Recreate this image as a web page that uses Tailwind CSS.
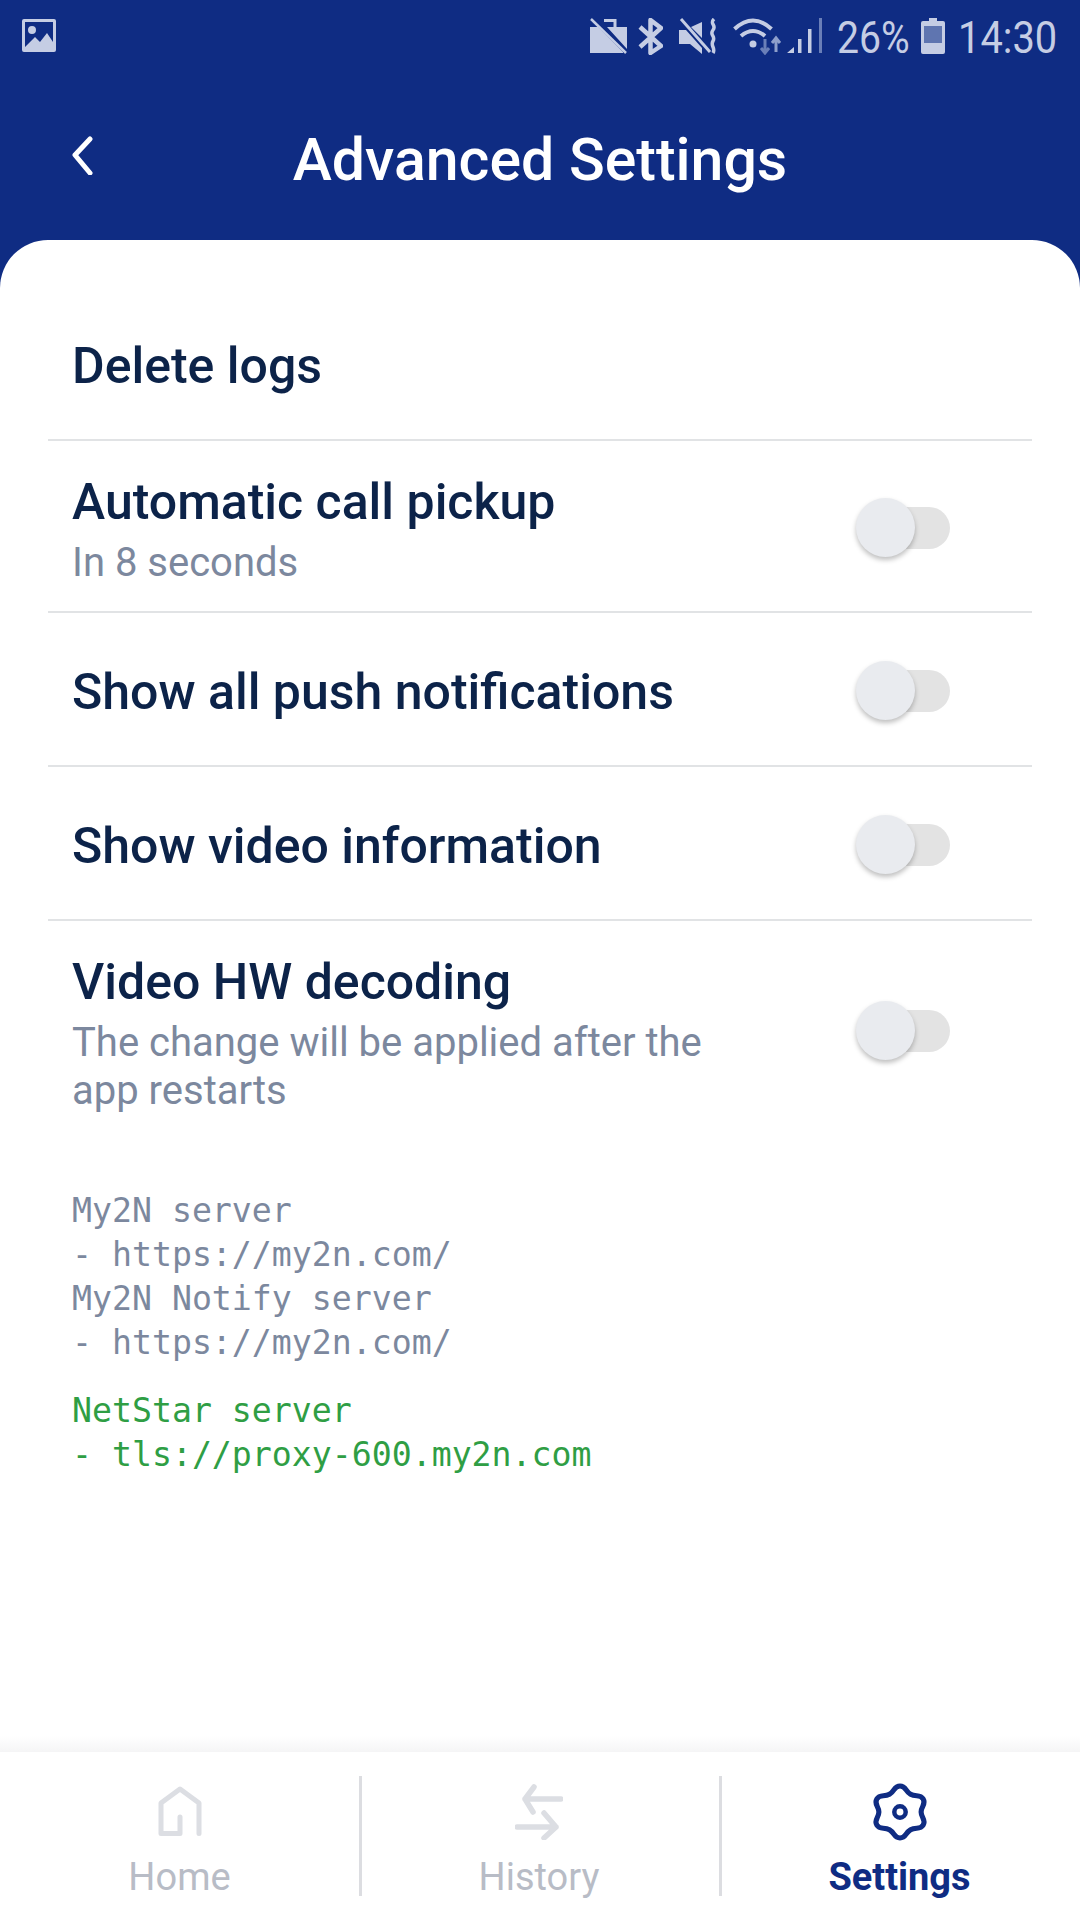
<!DOCTYPE html>
<html lang="en">
<head>
  <meta charset="UTF-8" />
  <meta name="viewport" content="width=device-width, initial-scale=1">
  <title>Advanced Settings</title>
  <script src="https://cdn.jsdelivr.net/npm/@tailwindcss/browser@4"></script>
</head>
<body class="bg-white font-['Roboto',sans-serif]">
  <div class="w-[1080px] h-[1920px] flex flex-col bg-[#0f2c83] overflow-hidden">

    <!-- status bar -->
    <div class="h-[72px] flex items-center justify-between pl-[21px] pr-[23px] text-[#c5cde4]">
      <svg width="36" height="36" viewBox="0 0 36 36"><path fill="#c5cde4" fill-rule="evenodd" d="M3 1h30a2 2 0 0 1 2 2v29a2 2 0 0 1-2 2H3a2 2 0 0 1-2-2V3a2 2 0 0 1 2-2zM4 29l10-10 5 5 7-9 6 9V4H4zM11 8a4 4 0 1 1 0 8 4 4 0 0 1 0-8z"/></svg>
      <div class="flex items-center">
        <svg width="37" height="36" viewBox="0 0 37 36"><path fill="#c5cde4" d="M0 9h8l25 25v1H0zM17 9h20v22z"/><path fill="none" stroke="#c5cde4" stroke-width="3" d="M14 2.500h11V10"/><path stroke="#c5cde4" stroke-width="2.500" d="M1 1l35 34"/></svg>
        <svg width="25" height="37" viewBox="0 0 25 37" class="ml-[11px]"><path fill="none" stroke="#c5cde4" stroke-width="4.500" stroke-linejoin="round" d="M2 9l21 19-10.500 7V2L23 10 2 29"/></svg>
        <svg width="38" height="36" viewBox="0 0 38 36" class="ml-[16px]"><path fill="#c5cde4" d="M0 12h7l16 18v6L11 26H0zM12 9l11-5v16z"/><path stroke="#c5cde4" stroke-width="3" d="M2 1l29 33"/><path fill="none" stroke="#c5cde4" stroke-width="3.500" d="M35 1c-5 5 3 6-1 11s3 6 0 11 3 7 0 12"/></svg>
        <svg width="50" height="37" viewBox="0 0 50 37" class="ml-[16px]"><path fill="none" stroke="#c5cde4" stroke-width="4" d="M1.500 11Q20-6 38.500 11M8 18q12-10 24 0"/><circle cx="20" cy="26" r="3.500" fill="#c5cde4"/><path fill="none" stroke="#6a7fb8" stroke-width="3" d="M32 21v14M28 30l4 5 4-5"/><path fill="none" stroke="#8e9fcb" stroke-width="3" d="M43 34V20M39 25l4-5 4 5"/></svg>
        <svg width="36" height="36" viewBox="0 0 36 36" class="ml-[4px]"><path fill="#c5cde4" d="M0 35l7-6v6zM11 21h3.500v14H11zM21 11h3.500v24H21z"/><path fill="#6a7fb8" d="M32 0h3v35h-3z"/></svg>
        <div class="ml-[14px] w-[72px] mt-[3px]"><span class="block origin-left scale-x-[0.87] text-[45px] leading-[44px] whitespace-nowrap">26%</span></div>
        <svg width="24" height="36" viewBox="0 0 24 36" class="ml-[12px]"><path fill="#c5cde4" d="M8 0h8v3h6a2 2 0 0 1 2 2v29a2 2 0 0 1-2 2H2a2 2 0 0 1-2-2V5a2 2 0 0 1 2-2h6z"/><path fill="#5f75b0" d="M3 8h18v17H3z"/></svg>
        <div class="ml-[13px] w-[99px] mt-[3px]"><span class="block origin-left scale-x-[0.885] text-[45px] leading-[44px] whitespace-nowrap">14:30</span></div>
      </div>
    </div>

    <!-- header -->
    <div class="h-[168px] relative flex items-center justify-center pt-[8px]">
      <svg width="24" height="40" viewBox="0 0 24 40" class="absolute left-[70px] top-[63px]"><path fill="none" stroke="#fff" stroke-width="5" stroke-linecap="round" stroke-linejoin="round" d="M20 4 5 20l15 18"/></svg>
      <h1 class="text-white text-[59px] leading-[64px] font-medium">Advanced Settings</h1>
    </div>

    <!-- card -->
    <div class="flex-1 bg-white rounded-t-[48px] flex flex-col">
      <div class="mx-[48px] flex flex-col">
        <div class="h-[201px] border-b-2 border-[#e1e3e5] flex items-center px-[24px] pt-[52px]">
          <span class="text-[#0c2349] text-[50px] leading-[56px] font-medium">Delete logs</span>
        </div>
        <div class="h-[172px] border-b-2 border-[#e1e3e5] flex items-start justify-between px-[24px] pt-[33px]">
          <div>
            <div class="text-[#0c2349] text-[50px] leading-[56px] font-medium">Automatic call pickup</div>
            <div class="text-[#7c889e] text-[40px] leading-[48px] mt-[9px]">In 8 seconds</div>
          </div>
          <div class="relative w-[94px] h-[59px] mr-[58px] mt-[24px] shrink-0">
            <div class="absolute right-0 top-[9px] w-[64px] h-[42px] rounded-full bg-[#e3e3e3]"></div>
            <div class="absolute left-0 top-0 w-[59px] h-[59px] rounded-full bg-[#e9ebef] shadow-[0_3px_5px_rgba(0,0,0,0.25)]"></div>
          </div>
        </div>
        <div class="h-[154px] border-b-2 border-[#e1e3e5] flex items-center justify-between px-[24px]">
          <span class="text-[#0c2349] text-[50px] leading-[56px] font-medium mt-[6px]">Show all push notifications</span>
          <div class="relative w-[94px] h-[59px] mr-[58px] mt-[2px] shrink-0">
            <div class="absolute right-0 top-[9px] w-[64px] h-[42px] rounded-full bg-[#e3e3e3]"></div>
            <div class="absolute left-0 top-0 w-[59px] h-[59px] rounded-full bg-[#e9ebef] shadow-[0_3px_5px_rgba(0,0,0,0.25)]"></div>
          </div>
        </div>
        <div class="h-[154px] border-b-2 border-[#e1e3e5] flex items-center justify-between px-[24px]">
          <span class="text-[#0c2349] text-[50px] leading-[56px] font-medium mt-[6px]">Show video information</span>
          <div class="relative w-[94px] h-[59px] mr-[58px] mt-[2px] shrink-0">
            <div class="absolute right-0 top-[9px] w-[64px] h-[42px] rounded-full bg-[#e3e3e3]"></div>
            <div class="absolute left-0 top-0 w-[59px] h-[59px] rounded-full bg-[#e9ebef] shadow-[0_3px_5px_rgba(0,0,0,0.25)]"></div>
          </div>
        </div>
        <div class="h-[200px] flex items-start justify-between px-[24px] pt-[33px]">
          <div>
            <div class="text-[#0c2349] text-[50px] leading-[56px] font-medium">Video HW decoding</div>
            <div class="text-[#7c889e] text-[40px] leading-[48px] mt-[9px] w-[680px]">The change will be applied after the app restarts</div>
          </div>
          <div class="relative w-[94px] h-[59px] mr-[58px] mt-[47px] shrink-0">
            <div class="absolute right-0 top-[9px] w-[64px] h-[42px] rounded-full bg-[#e3e3e3]"></div>
            <div class="absolute left-0 top-0 w-[59px] h-[59px] rounded-full bg-[#e9ebef] shadow-[0_3px_5px_rgba(0,0,0,0.25)]"></div>
          </div>
        </div>
      </div>

      <div class="mt-[68px] ml-[72px] font-['DejaVu_Sans_Mono',monospace] text-[33.2px] leading-[44px]">
        <div class="text-[#7c889e]">My2N server<br>- https://my2n.com/<br>My2N Notify server<br>- https://my2n.com/</div>
        <div class="text-[#2f9e44] mt-[24px]">NetStar server<br>- tls://proxy-600.my2n.com</div>
      </div>

      <!-- bottom nav -->
      <div class="mt-auto">
        <div class="h-[16px] bg-gradient-to-b from-white to-[#f5f5f6]"></div>
        <div class="h-[168px] bg-white flex items-start pt-[24px]">
          <div class="w-[362px] h-[120px] border-r-[3px] border-[#dcdde1] flex flex-col items-center">
            <svg width="48" height="56" viewBox="0 0 48 56" class="mt-[8px] shrink-0"><path fill="none" stroke="#dcdee3" stroke-width="5" stroke-linecap="round" stroke-linejoin="round" d="M43 49.500V19L24 5 5 19v30.500h19V33"/></svg>
            <span class="mt-[15px] text-[38px] leading-[44px] text-[#b8bcc6]">Home</span>
          </div>
          <div class="w-[360px] h-[120px] pr-[3px] border-r-[3px] border-[#dcdde1] flex flex-col items-center">
            <svg width="48" height="56" viewBox="0 0 48 56" class="mt-[8px] shrink-0"><path fill="none" stroke="#dcdee3" stroke-width="5.500" stroke-linecap="round" stroke-linejoin="round" d="M46 15H10M19 3l-9 12 8 13M2 43h39M29 29l12 14-12 11"/></svg>
            <span class="mt-[15px] text-[38px] leading-[44px] text-[#b8bcc6]">History</span>
          </div>
          <div class="flex-1 h-[120px] pr-[3px] flex flex-col items-center">
            <svg width="58" height="60" viewBox="-29 -30 58 60" class="mt-[6px] shrink-0"><g transform="scale(1.03 1)"><path fill="none" stroke="#0f2c83" stroke-width="5" stroke-linejoin="round" d="M0-26C6-26 5.050-20.750 10.250-17.750 15.450-14.750 19.520-18.200 22.520-13 25.520-7.800 20.500-6 20.500 0 20.500 6 25.520 7.800 22.520 13 19.520 18.200 15.450 14.750 10.250 17.750 5.050 20.750 6 26 0 26-6 26-5.050 20.750-10.250 17.750-15.450 14.750-19.520 18.200-22.520 13-25.520 7.800-20.500 6-20.500 0-20.500-6-25.520-7.800-22.520-13-19.520-18.200-15.450-14.750-10.250-17.750-5.050-20.750-6-26 0-26z"/></g><circle cx="0" cy="0" r="5.700" fill="none" stroke="#0f2c83" stroke-width="4.500"/></svg>
            <span class="mt-[13px] text-[38px] leading-[44px] font-bold text-[#0f2c83]">Settings</span>
          </div>
        </div>
      </div>
    </div>
  </div>
</body>
</html>
